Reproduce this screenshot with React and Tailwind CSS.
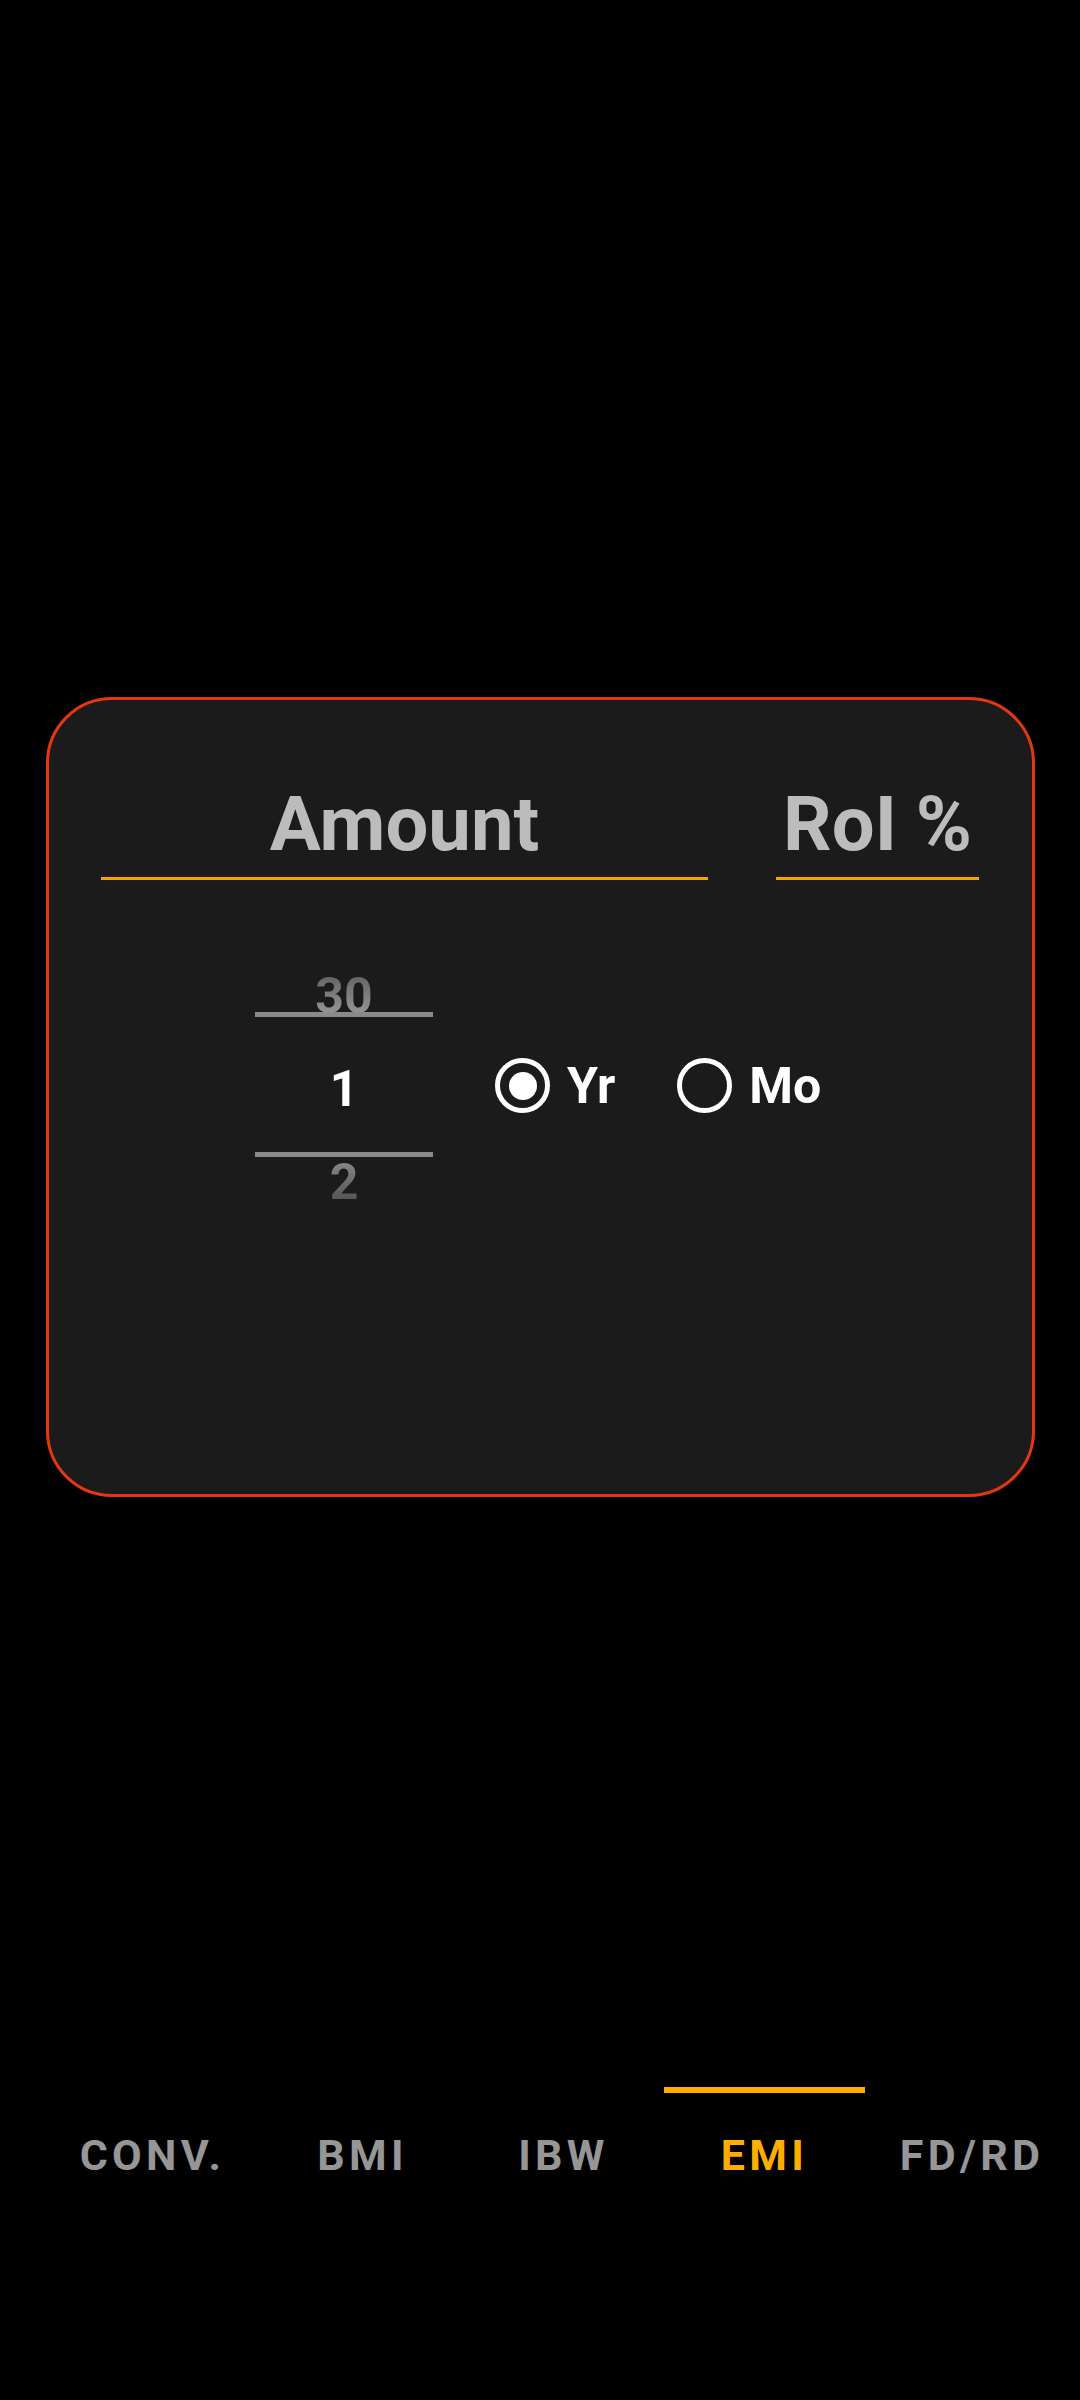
import React, { useState } from "react";

const TABS = [
  { label: "CONV.", width: "w-[219px]" },
  { label: "BMI", width: "w-[201px]" },
  { label: "IBW", width: "w-[201px]" },
  { label: "EMI", width: "w-[201px]" },
  { label: "FD/RD", width: "w-[214px]" },
];

function Radio({ label, checked, onClick, className = "" }) {
  return (
    <button onClick={onClick} className={`flex items-center ${className}`}>
      <span className="w-[55px] h-[55px] rounded-full border-[5px] border-white flex items-center justify-center shrink-0">
        {checked && <span className="w-[28px] h-[28px] rounded-full bg-white" />}
      </span>
      <span className="ml-[17px] text-[50px] font-bold leading-none text-white">{label}</span>
    </button>
  );
}

function Field({ label, width }) {
  return (
    <div className={width}>
      <div className="text-[76px] font-bold leading-none text-center text-[#bcbcbc] whitespace-nowrap">{label}</div>
      <div className="mt-[15px] h-[3px] bg-[#f5a300]" />
    </div>
  );
}

function NumberPicker() {
  return (
    <div className="relative w-[178px] h-[279px] flex flex-col shrink-0">
      <div className="h-[93px] flex items-center justify-center text-[50px] font-bold leading-none">
        <span className="bg-linear-to-b from-[#5e5e5e] to-[#a0a0a0] bg-clip-text text-transparent">30</span>
      </div>
      <div className="h-[93px] flex items-center justify-center text-[50px] font-bold leading-none text-white">1</div>
      <div className="h-[93px] flex items-center justify-center text-[50px] font-bold leading-none">
        <span className="bg-linear-to-b from-[#8e8e8e] to-[#4c4c4c] bg-clip-text text-transparent">2</span>
      </div>

      {/* SELECTION DIVIDERS */}
      <div className="absolute left-0 right-0 top-[63px] h-[5px] bg-[#8a8a8a]" />
      <div className="absolute left-0 right-0 top-[203px] h-[5px] bg-[#8a8a8a]" />
    </div>
  );
}

export default function App() {
  const [unit, setUnit] = useState("yr");
  const [tab, setTab] = useState("EMI");

  return (
    <div className="w-[1080px] min-h-[2400px] bg-black font-['Roboto',sans-serif] pt-[697px]">
      {/* EMI CARD */}
      <div className="ml-[46px] w-[989px] h-[800px] rounded-[66px] border-[3px] border-[#e3380f] bg-[#1b1b1b]">
        <div className="pt-[86px] px-[52px] flex gap-[68px]">
          <Field label="Amount" width="w-[607px]" />
          <Field label="RoI %" width="w-[203px]" />
        </div>

        <div className="mt-[69px] pl-[206px] flex items-center">
          <NumberPicker />
          <div className="ml-[62px] mb-[6px] flex items-center">
            <Radio label="Yr" checked={unit === "yr"} onClick={() => setUnit("yr")} />
            <Radio label="Mo" checked={unit === "mo"} onClick={() => setUnit("mo")} className="ml-[62px]" />
          </div>
        </div>
      </div>

      {/* BOTTOM TABS */}
      <div className="mt-[590px] pl-[43px] flex">
        {TABS.map((t) => {
          const active = t.label === tab;
          return (
            <button key={t.label} onClick={() => setTab(t.label)} className={`${t.width} flex flex-col items-center shrink-0`}>
              <span className={`w-full h-[6px] ${active ? "bg-[#ffae00]" : "bg-transparent"}`} />
              <span className={`mt-[41px] text-[43px] font-bold leading-none tracking-[0.1em] ${active ? "text-[#ffae00]" : "text-[#969696]"}`}>
                {t.label}
              </span>
            </button>
          );
        })}
      </div>
    </div>
  );
}
